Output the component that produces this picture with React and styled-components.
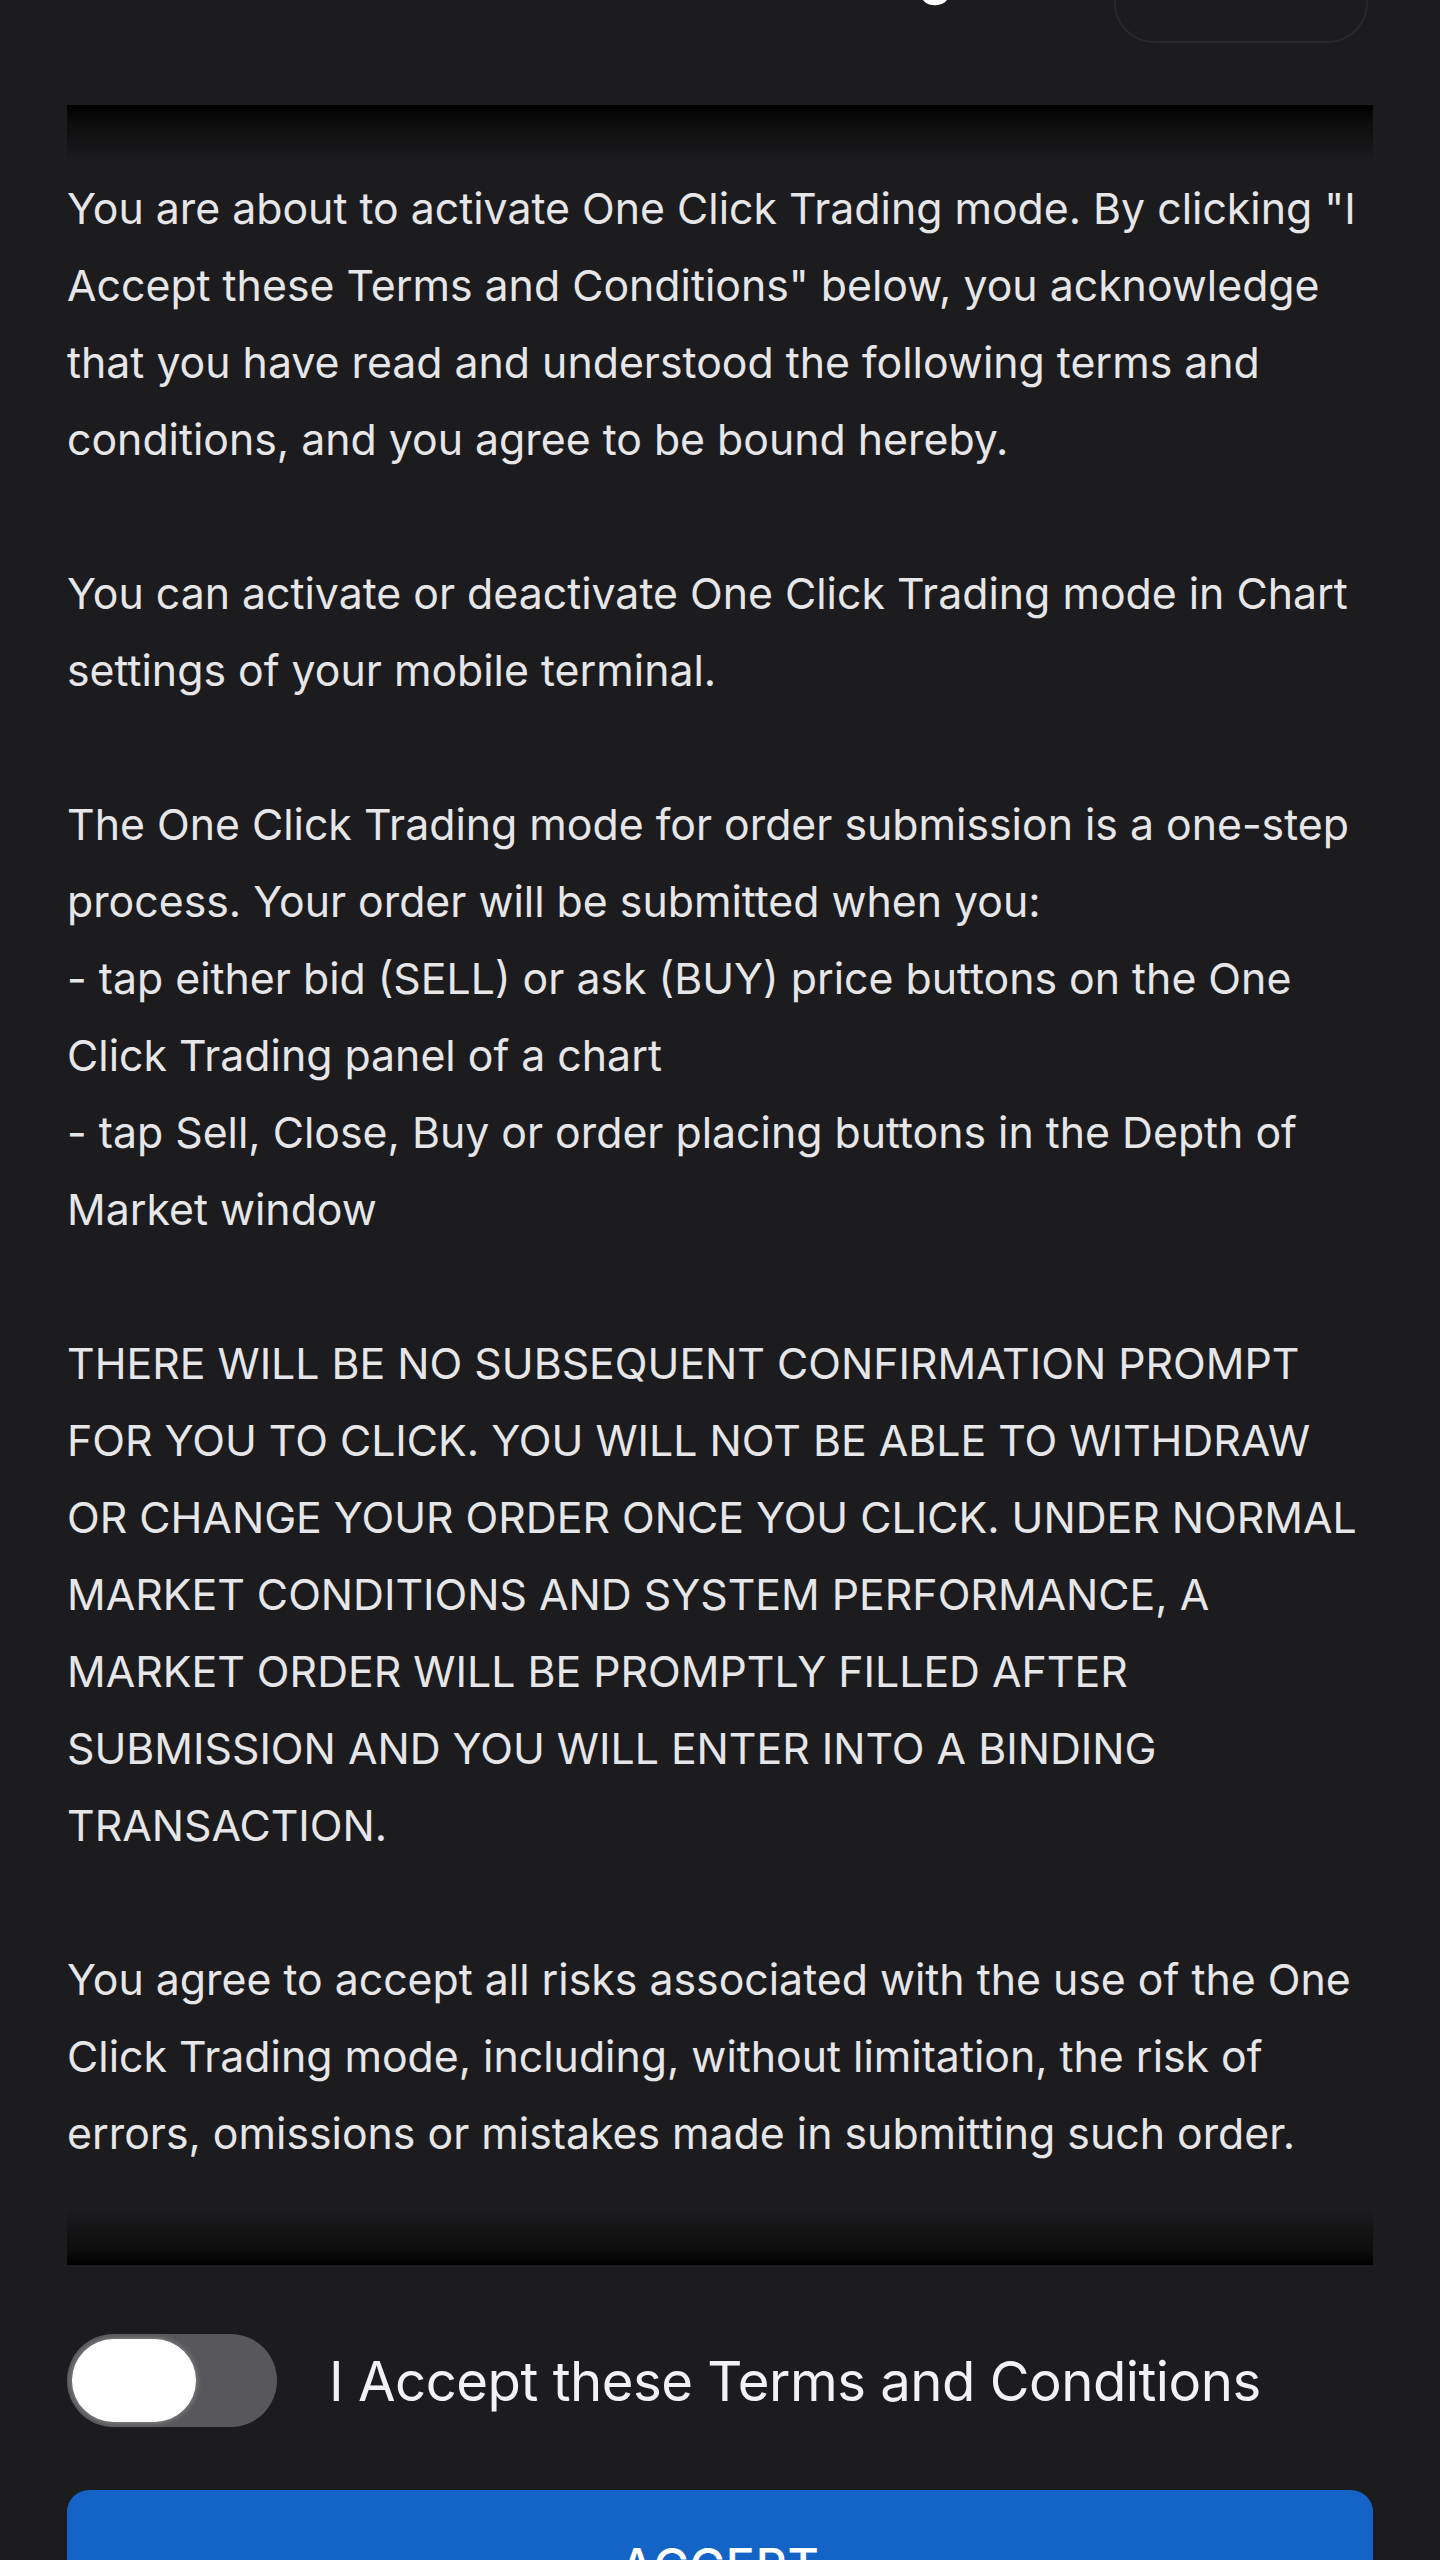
import React from "react"
import styled, { createGlobalStyle } from "styled-components"

const GlobalStyle = createGlobalStyle`
html, body {
  margin: 0;
  padding: 0;
  background: #1c1c1e;
  overflow: hidden;
}
* {
  box-sizing: border-box;
}
`

const Screen = styled.div`
width: 1440px;
height: 2560px;
overflow: hidden;
background: #1c1c1e;
font-family: Inter, "Noto Sans", "Liberation Sans", sans-serif;
color: #e6e6e8;
display: flex;
flex-direction: column;
`

// header is scrolled away, only its bottom edge still shows
const Header = styled.div`
height: 44px;
overflow: hidden;
display: flex;
align-items: flex-end;
flex-shrink: 0;
`
const HeaderSide = styled.div`
width: 326px;
flex-shrink: 0;
display: flex;
justify-content: flex-end;
padding-right: ${props => (props.right ? "72px" : "0")};
padding-bottom: 1px;
`
const Title = styled.div`
flex: 1;
text-align: center;
font-size: 53px;
line-height: 53px;
font-weight: 600;
color: #ffffff;
margin-bottom: 42px;
padding-left: 10px;
`
const CloseButton = styled.div`
width: 254px;
height: 96px;
border: 2px solid #29292c;
border-radius: 40px;
`

const TermsBox = styled.div`
position: relative;
margin: 61px 67px 0;
padding: 65px 0 93px;
flex-shrink: 0;
`
const FadeTop = styled.div`
position: absolute;
left: 0;
right: 0;
top: 0;
height: 58px;
background: linear-gradient(to bottom, #000 0%, rgba(10, 10, 11, 0.85) 30%, rgba(28, 28, 30, 0) 100%);
pointer-events: none;
`
const FadeBottom = styled.div`
position: absolute;
left: 0;
right: 0;
bottom: 0;
height: 56px;
background: linear-gradient(to top, #000 0%, rgba(10, 10, 11, 0.85) 25%, rgba(28, 28, 30, 0) 100%);
pointer-events: none;
`
const Paragraph = styled.p`
margin: 0 0 77px;
font-size: 42.8px;
line-height: 77px;
white-space: pre-line;
&:last-of-type {
  margin-bottom: 0;
}
`

const AcceptRow = styled.label`
display: flex;
align-items: center;
gap: 52px;
margin: 69px 67px 0;
flex-shrink: 0;
`
const Switch = styled.div`
width: 210px;
height: 93px;
border-radius: 47px;
background: ${props => (props.on ? "#34c759" : "#58585c")};
padding: 5px;
display: flex;
justify-content: ${props => (props.on ? "flex-end" : "flex-start")};
`
const Knob = styled.div`
width: 124px;
height: 83px;
border-radius: 42px;
background: #ffffff;
box-shadow: 0 0 6px rgba(255, 255, 255, 0.35);
`
const AcceptLabel = styled.span`
font-size: 54.5px;
line-height: 64px;
color: #f2f2f4;
letter-spacing: -0.5px;
`

const AcceptButton = styled.button`
margin: 63px 67px 0;
height: 150px;
flex-shrink: 0;
border: none;
border-radius: 22px;
background: #1463c6;
color: #ffffff;
font-family: Inter, "Liberation Sans", sans-serif;
font-size: 48px;
font-weight: 500;
letter-spacing: 1px;
`

const terms = [
  "You are about to activate One Click Trading mode. By clicking \"I\nAccept these Terms and Conditions\" below, you acknowledge\nthat you have read and understood the following terms and\nconditions, and you agree to be bound hereby.",
  "You can activate or deactivate One Click Trading mode in Chart\nsettings of your mobile terminal.",
  "The One Click Trading mode for order submission is a one-step\nprocess. Your order will be submitted when you:\n- tap either bid (SELL) or ask (BUY) price buttons on the One\nClick Trading panel of a chart\n- tap Sell, Close, Buy or order placing buttons in the Depth of\nMarket window",
  "THERE WILL BE NO SUBSEQUENT CONFIRMATION PROMPT\nFOR YOU TO CLICK. YOU WILL NOT BE ABLE TO WITHDRAW\nOR CHANGE YOUR ORDER ONCE YOU CLICK. UNDER NORMAL\nMARKET CONDITIONS AND SYSTEM PERFORMANCE, A\nMARKET ORDER WILL BE PROMPTLY FILLED AFTER\nSUBMISSION AND YOU WILL ENTER INTO A BINDING\nTRANSACTION.",
  "You agree to accept all risks associated with the use of the One\nClick Trading mode, including, without limitation, the risk of\nerrors, omissions or mistakes made in submitting such order.",
]

export default function App() {
  const [accepted, setAccepted] = React.useState(false)
  return (
    <>
      <GlobalStyle />
      <Screen>
        <Header>
          <HeaderSide />
          <Title>One Click Trading</Title>
          <HeaderSide right>
            <CloseButton />
          </HeaderSide>
        </Header>
        <TermsBox>
          {terms.map((t, i) => (
            <Paragraph key={i}>{t}</Paragraph>
          ))}
          <FadeTop />
          <FadeBottom />
        </TermsBox>
        <AcceptRow onClick={() => setAccepted(!accepted)}>
          <Switch on={accepted ? 1 : 0}>
            <Knob />
          </Switch>
          <AcceptLabel>I Accept these Terms and Conditions</AcceptLabel>
        </AcceptRow>
        <AcceptButton disabled={!accepted}>ACCEPT</AcceptButton>
      </Screen>
    </>
  )
}
